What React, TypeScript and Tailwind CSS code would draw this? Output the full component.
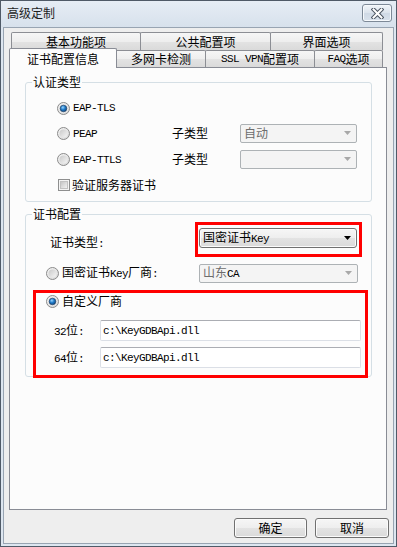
import React from "react";

const cjk = "font-['Noto_Sans_CJK_SC',sans-serif]";
const tabBg =
  "bg-[linear-gradient(to_bottom,#f6f6f6_0%,#eeeeee_50%,#e3e3e3_50%,#dadada_100%)]";

// ASCII in the dialog is drawn with a fixed-width font (SimSun-like)
const M = ({ children }: { children: React.ReactNode }) => (
  <span className="font-['Liberation_Mono',monospace] text-[11px] tracking-[-0.6px] text-black">{children}</span>
);

const Radio = ({ checked = false }: { checked?: boolean }) => (
  <svg width="13" height="13" viewBox="0 0 13 13" className="shrink-0">
    <defs>
      <linearGradient id="rOuter" x1="0" y1="0" x2="1" y2="1">
        <stop offset="0" stopColor="#f7f7f7" />
        <stop offset="1" stopColor="#d6d6d6" />
      </linearGradient>
      <linearGradient id="rInner" x1="0" y1="0" x2="1" y2="1">
        <stop offset="0" stopColor="#c9c9c9" />
        <stop offset="1" stopColor="#f5f5f5" />
      </linearGradient>
      <radialGradient id="rDot" cx="0.4" cy="0.35" r="0.75">
        <stop offset="0" stopColor="#9ad6ff" />
        <stop offset="0.45" stopColor="#1f7ac8" />
        <stop offset="1" stopColor="#0c3a6b" />
      </radialGradient>
    </defs>
    <circle cx="6.5" cy="6.5" r="6" fill="url(#rOuter)" stroke="#8b8b8b" />
    <circle cx="6.5" cy="6.5" r="4" fill="url(#rInner)" />
    {checked && <circle cx="6.5" cy="6.5" r="3.3" fill="url(#rDot)" stroke="#1c3d63" strokeWidth="0.6" />}
  </svg>
);

const Checkbox = () => (
  <div className="w-[12px] h-[12px] shrink-0 border border-[#8e8f8f] bg-[#f4f4f4] p-[1px]">
    <div className="w-full h-full bg-[linear-gradient(135deg,#c6c6c6,#f2f2f2)] border border-[#c2c2c2]" />
  </div>
);

const Arrow = ({ color }: { color: string }) => (
  <svg width="7" height="4" viewBox="0 0 7 4" className="shrink-0">
    <path d="M0 0H7L3.5 4Z" fill={color} />
  </svg>
);

const Combo = ({ children, enabled = false, w }: { children?: React.ReactNode; enabled?: boolean; w: string }) =>
  enabled ? (
    <div
      className={`${w} h-[20px] flex items-center justify-between pl-[3px] pr-[5px] rounded-[3px] border border-[#707070] ${tabBg} shadow-[inset_0_0_0_1px_#fbfbfb]`}
    >
      <span className="text-black">{children}</span>
      <Arrow color="#000" />
    </div>
  ) : (
    <div
      className={`${w} h-[19px] flex items-center justify-between pl-[3px] pr-[5px] rounded-[2px] border border-[#adb2b5] bg-[#f4f4f4]`}
    >
      <span className="text-[#6d6d6d]">{children}</span>
      <Arrow color="#a8a8a8" />
    </div>
  );

const TextBox = ({ value }: { value: string }) => (
  <div className="w-[261px] h-[21px] flex items-center pl-[2px] rounded-[2px] border border-[#dbdfe6] border-t-[#abadb3] bg-white">
    <M>{value}</M>
  </div>
);

const Tab = ({ children, w, first = false }: { children: React.ReactNode; w: string; first?: boolean }) => (
  <div
    className={`${w} h-full flex items-center justify-center border-t border-r border-[#8c8e94] rounded-t-[2px] ${tabBg} ${
      first ? "border-l" : "border-l -ml-px"
    }`}
  >
    {children}
  </div>
);

export default function App() {
  return (
    <div
      className={`w-[397px] h-[547px] flex flex-col border border-[#4f5a67] bg-[#dde6f0] ${cjk} text-[12px] leading-[14px] text-black`}
    >
      {/* 标题栏 */}
      <div className="h-[26px] flex items-start justify-between pl-[6px] pr-[4px] bg-[linear-gradient(to_bottom,#e6edf5,#d7e1ec)]">
        <span className="mt-[5px] text-[#1e1e1e]">高级定制</span>
        <div className="mt-[3px] w-[30px] h-[18px] flex items-center justify-center rounded-[3px] border border-[#7d8997] bg-[linear-gradient(to_bottom,#f1f5f9,#dbe3ec_50%,#cfd9e5_50%,#d9e2ec)] shadow-[inset_0_0_0_1px_#f6f9fc]">
          <svg width="13" height="11" viewBox="0 0 13 11">
            <path d="M2.5 1.5L10.5 9.5M10.5 1.5L2.5 9.5" stroke="#4a5461" strokeWidth="4" strokeLinecap="square" />
            <path d="M2.5 1.5L10.5 9.5M10.5 1.5L2.5 9.5" stroke="#ffffff" strokeWidth="2" strokeLinecap="square" />
          </svg>
        </div>
      </div>

      {/* 客户区 */}
      <div className="flex-1 mx-[2px] mb-[2px] border border-[#98a4b2] bg-[#eeeeee] flex flex-col">
        {/* 标签页 第一行 */}
        <div className="flex h-[18px] ml-[7px] mt-[4px]">
          <Tab w="w-[130px]" first>基本功能项</Tab>
          <Tab w="w-[131px]">公共配置项</Tab>
          <Tab w="w-[113px]">界面选项</Tab>
        </div>

        {/* 标签页 第二行 */}
        <div className="flex items-end h-[17px] ml-[5px]">
          <div className="relative z-10 w-[108px] h-[20px] -mb-px flex items-center justify-center border border-b-0 border-[#898c95] rounded-t-[2px] bg-[#fcfcfc]">
            证书配置信息
          </div>
          <div className={`w-[89px] h-[17px] flex items-center justify-center border-t border-r border-[#8c8e94] rounded-tr-[2px] ${tabBg}`}>
            多网卡检测
          </div>
          <div className={`w-[110px] h-[17px] -ml-px flex items-center justify-center border-t border-x border-[#8c8e94] rounded-t-[2px] ${tabBg}`}>
            <M>SSL VPN</M>配置项
          </div>
          <div className={`w-[69px] h-[17px] -ml-px flex items-center justify-center border-t border-x border-[#8c8e94] rounded-t-[2px] ${tabBg}`}>
            <M>FAQ</M>选项
          </div>
        </div>

        {/* 标签页内容 */}
        <div className="ml-[5px] w-[378px] h-[443px] border border-[#898c95] bg-[#fcfcfc] flex flex-col">
          {/* 认证类型 */}
          <fieldset className="ml-[15px] mt-[7px] w-[347px] pb-[6px] border border-[#d5dfe5] rounded-[3px]">
            <legend className="ml-[6px] px-[1px]">认证类型</legend>
            <div className="flex items-center h-[20px] mt-[9px] pl-[31px] gap-[3px]">
              <Radio checked />
              <M>EAP-TLS</M>
            </div>
            <div className="flex items-center h-[20px] mt-[5px] pl-[31px] gap-[3px]">
              <Radio />
              <span className="w-[96px]">
                <M>PEAP</M>
              </span>
              <span className="w-[65px]">子类型</span>
              <Combo w="w-[117px]">自动</Combo>
            </div>
            <div className="flex items-center h-[20px] mt-[6px] pl-[31px] gap-[3px]">
              <Radio />
              <span className="w-[96px]">
                <M>EAP-TTLS</M>
              </span>
              <span className="w-[65px]">子类型</span>
              <Combo w="w-[117px]" />
            </div>
            <div className="flex items-center h-[20px] mt-[6px] pl-[32px] gap-[2px]">
              <Checkbox />
              <span>验证服务器证书</span>
            </div>
          </fieldset>

          {/* 证书配置 */}
          <fieldset className="ml-[15px] mt-[5px] w-[347px] border border-[#d5dfe5] rounded-[3px]">
            <legend className="ml-[6px] px-[1px]">证书配置</legend>
            <div className="flex items-start mt-[1px]">
              <span className="ml-[24px] w-[145px] mt-[13px]">
                证书类型<M>:</M>
              </span>
              <div className="w-[167px] h-[35px] border-[3px] border-[#ff0000] pt-[3px] pl-[1px]">
                <Combo enabled w="w-[158px]">
                  国密证书<M>Key</M>
                </Combo>
              </div>
            </div>
            <div className="flex items-center h-[20px] mt-[6px] ml-[20px] gap-[3px]">
              <Radio />
              <span className="w-[134px]">
                国密证书<M>Key</M>厂商<M>:</M>
              </span>
              <Combo w="w-[159px]">
                山东<M>CA</M>
              </Combo>
            </div>

            <div className="ml-[7px] mt-[7px] -mb-[2px] w-[335px] h-[88px] border-[3px] border-[#ff0000] flex flex-col">
              <div className="flex items-center h-[14px] mt-[1px] pl-[10px] gap-[3px]">
                <Radio checked />
                <span>自定义厂商</span>
              </div>
              <div className="flex items-center h-[21px] mt-[12px]">
                <span className="ml-[18px] w-[46px]">
                  <M>32</M>位<M>:</M>
                </span>
                <TextBox value="c:\KeyGDBApi.dll" />
              </div>
              <div className="flex items-center h-[21px] mt-[6px]">
                <span className="ml-[18px] w-[46px]">
                  <M>64</M>位<M>:</M>
                </span>
                <TextBox value="c:\KeyGDBApi.dll" />
              </div>
            </div>
          </fieldset>
        </div>

        {/* 底部按钮 */}
        <div className="flex justify-end gap-[8px] pr-[4px] mt-[8px]">
          {["确定", "取消"].map((t, i) => (
            <div
              key={t}
              className={`${i === 0 ? "w-[73px]" : "w-[74px]"} h-[20px] flex items-center justify-center rounded-[3px] border border-[#707070] ${tabBg} shadow-[inset_0_0_0_1px_#fbfbfb]`}
            >
              {t}
            </div>
          ))}
        </div>
      </div>
    </div>
  );
}
